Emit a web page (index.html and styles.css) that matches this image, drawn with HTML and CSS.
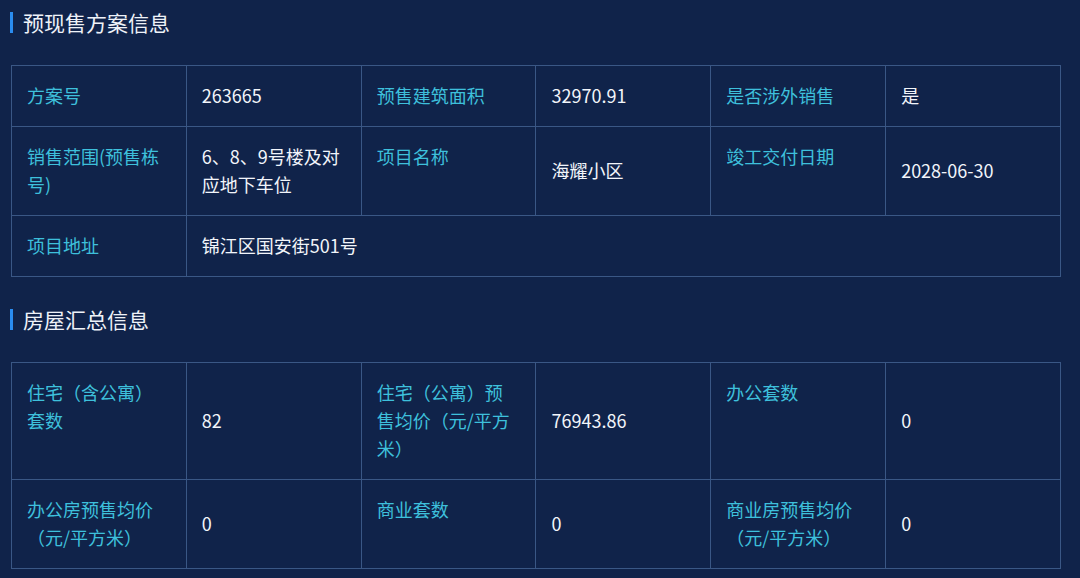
FILE: index.html
```html
<!DOCTYPE html>
<html lang="zh">
<head>
<meta charset="utf-8">
<link rel="stylesheet" href="styles.css">
</head>
<body>
<div class="page">
  <h2 class="title title-first">预现售方案信息</h2>
  <table class="info">
    <colgroup><col><col><col><col><col><col></colgroup>
    <tr class="r1">
      <td class="lbl">方案号</td><td class="val">263665</td>
      <td class="lbl">预售建筑面积</td><td class="val">32970.91</td>
      <td class="lbl">是否涉外销售</td><td class="val">是</td>
    </tr>
    <tr>
      <td class="lbl">销售范围(预售栋号)</td><td class="val">6、8、9号楼及对应地下车位</td>
      <td class="lbl">项目名称</td><td class="val">海耀小区</td>
      <td class="lbl">竣工交付日期</td><td class="val">2028-06-30</td>
    </tr>
    <tr>
      <td class="lbl">项目地址</td><td class="val" colspan="5">锦江区国安街501号</td>
    </tr>
  </table>
  <h2 class="title">房屋汇总信息</h2>
  <table class="info">
    <colgroup><col><col><col><col><col><col></colgroup>
    <tr>
      <td class="lbl">住宅（含公寓）套数</td><td class="val">82</td>
      <td class="lbl">住宅（公寓）预售均价（元/平方米）</td><td class="val">76943.86</td>
      <td class="lbl">办公套数</td><td class="val">0</td>
    </tr>
    <tr>
      <td class="lbl">办公房预售均价（元/平方米）</td><td class="val">0</td>
      <td class="lbl">商业套数</td><td class="val">0</td>
      <td class="lbl">商业房预售均价（元/平方米）</td><td class="val">0</td>
    </tr>
  </table>
</div>
</body>
</html>
```

FILE: styles.css
```css
html, body {
  margin: 0;
  padding: 0;
  background: #10234a;
}
body {
  font-family: "Microsoft YaHei", "Noto Sans CJK SC", "Noto Sans", sans-serif;
  width: 1080px;
  height: 578px;
  overflow: hidden;
}
.page {
  padding: 0 19px 0 10px;
}
.title {
  margin: 32px 0 32px 0;
  height: 21px;
  line-height: 21px;
  border-left: 3px solid #2a8cf0;
  padding-left: 10px;
  font-size: 21px;
  font-weight: normal;
  color: #eef2f8;
}
.title-first {
  margin-top: 12px;
}
.info {
  margin-left: 1px;
  width: 1050px;
  border-collapse: collapse;
  table-layout: fixed;
  font-size: 18px;
  line-height: 28px;
}
.info td {
  border: 1px solid #3a5785;
  padding: 15px 17px 17px 15px;
  word-break: break-all;
}
.lbl {
  color: #3ec0dc;
  vertical-align: top;
}
.val {
  color: #f2f5fa;
  vertical-align: middle;
}
```
